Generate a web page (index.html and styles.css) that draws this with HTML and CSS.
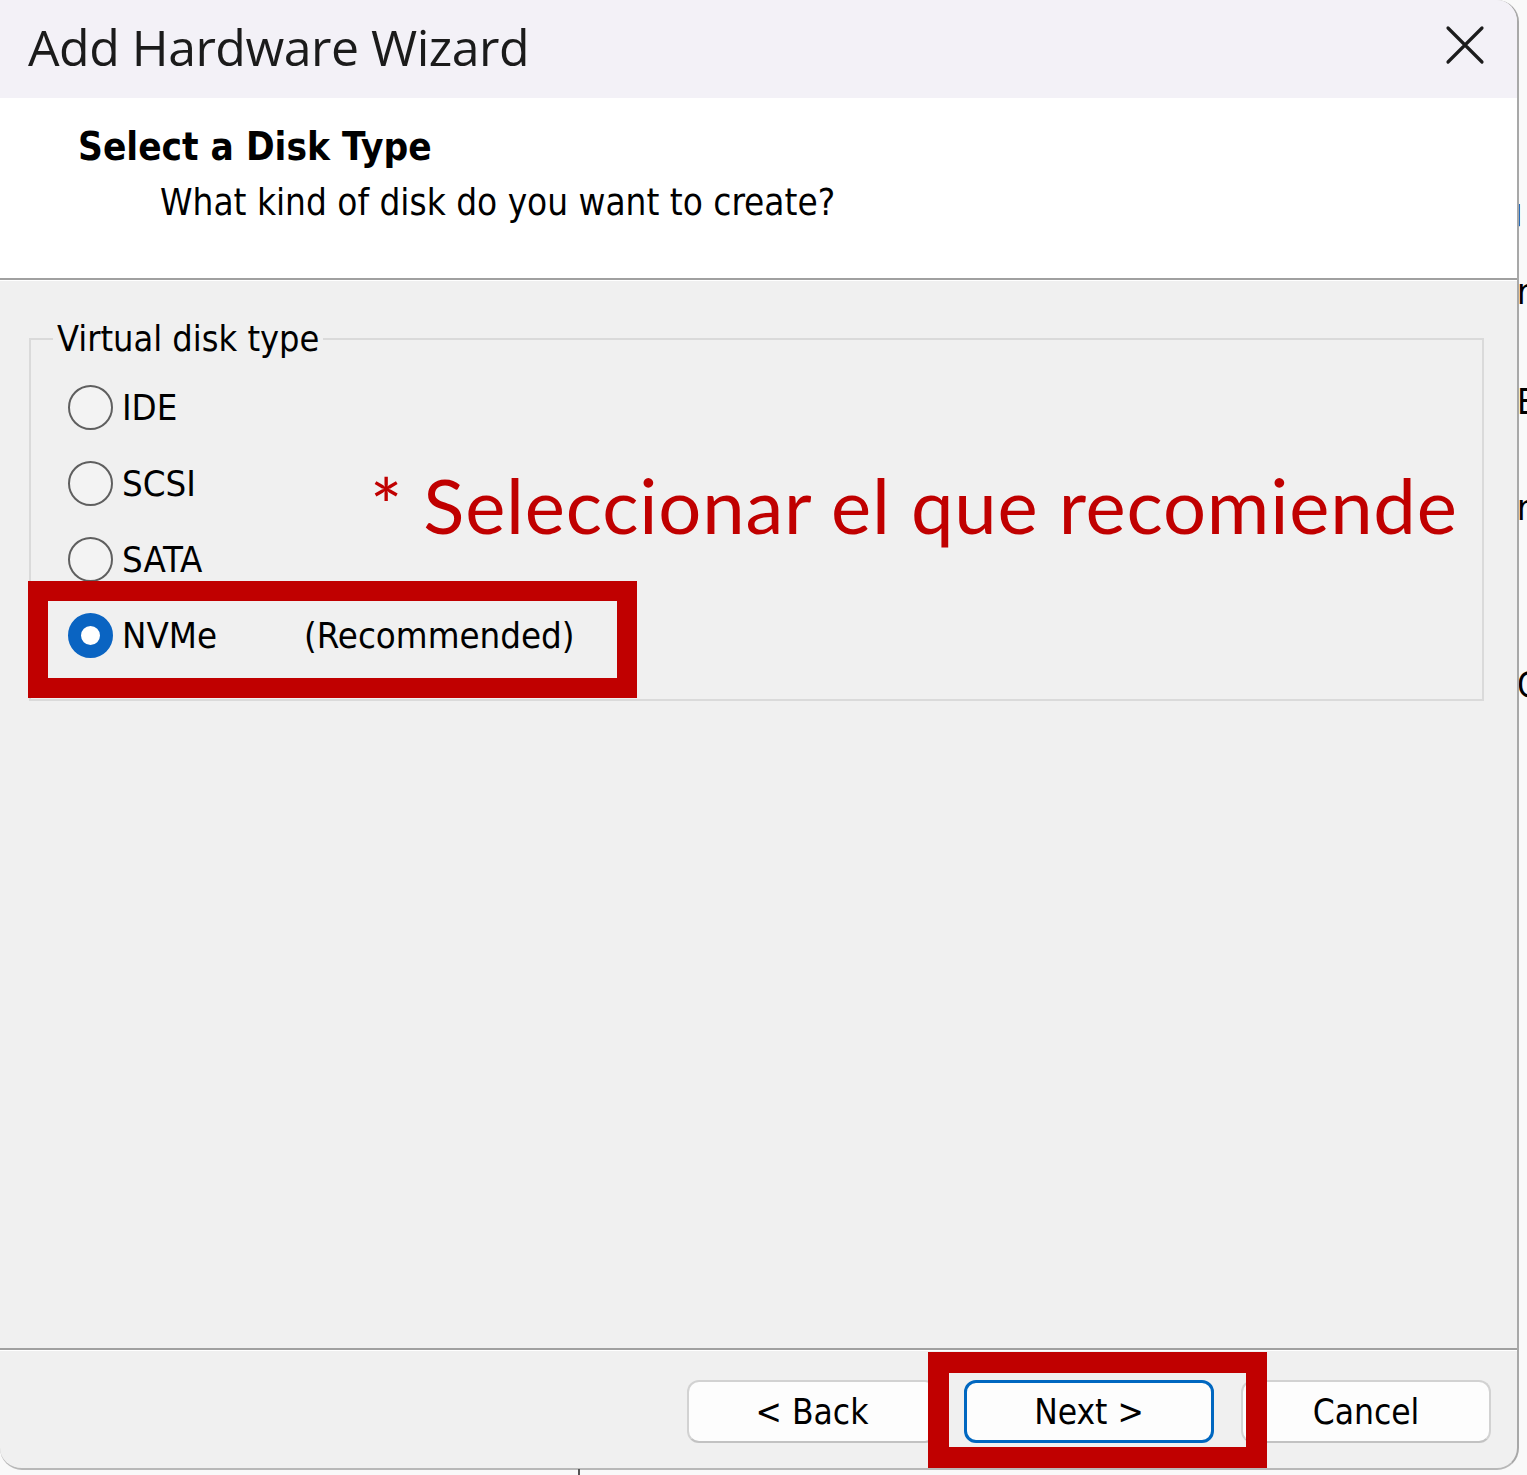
FILE: index.html
```html
<!DOCTYPE html>
<html lang="en">
<head>
<meta charset="utf-8">
<title>Add Hardware Wizard</title>
<link rel="stylesheet" href="styles.css">
</head>
<body>
<div class="desktop">
  <div class="window">
    <div class="titlebar">
      <span class="title">Add Hardware Wizard</span>
      <button class="close" aria-label="Close">
        <svg width="40" height="40" viewBox="0 0 40 40"><path d="M3 3 L37 37 M37 3 L3 37" stroke="#1c1c1c" stroke-width="3.2" stroke-linecap="round" fill="none"/></svg>
      </button>
    </div>
    <div class="header">
      <div class="h-title">Select a Disk Type</div>
      <div class="h-sub">What kind of disk do you want to create?</div>
    </div>
    <div class="sep"></div>
    <div class="content">
      <fieldset class="group">
        <legend>Virtual disk type</legend>
        <div class="opts">
          <label class="opt"><span class="radio"></span><span class="lbl">IDE</span></label>
          <label class="opt"><span class="radio"></span><span class="lbl">SCSI</span></label>
          <label class="opt"><span class="radio"></span><span class="lbl">SATA</span></label>
          <label class="opt"><span class="radio checked"></span><span class="lbl">NVMe</span><span class="rec">(Recommended)</span></label>
        </div>
      </fieldset>
      <div class="note">* Seleccionar el que recomiende</div>
      <div class="mark mark-nvme"></div>
    </div>
    <div class="sep"></div>
    <div class="footer">
      <button class="btn">&lt; Back</button>
      <button class="btn primary">Next &gt;</button>
      <button class="btn">Cancel</button>
      <div class="mark mark-next"></div>
    </div>
  </div>
  <div class="behind">
    <span class="frag f1">┘</span>
    <span class="frag f2">r</span>
    <span class="frag f3">)</span>
    <span class="frag f4">E</span>
    <span class="frag f5">r</span>
    <span class="frag f6">C</span>
  </div>
</div>
<div class="tick"></div>
</body>
</html>
```

FILE: styles.css
```css
html, body {
  margin: 0;
  padding: 0;
  background: #f9f9f9;
}
body {
  width: 1527px;
  height: 1475px;
  overflow: hidden;
  position: relative;
  font-family: "DejaVu Sans Condensed", "DejaVu Sans", sans-serif;
  font-stretch: condensed;
  color: #000;
}
.desktop {
  display: flex;
  align-items: flex-start;
}
.window {
  width: 1519px;
  height: 1470px;
  box-sizing: border-box;
  border-right: 2px solid #a8a8a8;
  border-bottom: 2px solid #b8b8b8;
  border-radius: 0 22px 22px 22px;
  overflow: hidden;
  display: flex;
  flex-direction: column;
  background: #f0f0f0;
  flex: none;
}
.titlebar {
  height: 98px;
  flex: none;
  background: #f3f1f7;
  display: flex;
  align-items: center;
  justify-content: space-between;
  padding: 0 32px 0 28px;
}
.title {
  font-family: "Open Sans", "Noto Sans", sans-serif;
  font-stretch: normal;
  font-size: 50px;
  color: #1b1b1b;
  letter-spacing: -0.5px;
  margin-top: -4px;
}
.close {
  background: none;
  border: 0;
  padding: 0;
  width: 40px;
  height: 40px;
  margin-top: -8px;
}
.close svg { display: block; }
.header {
  height: 180px;
  flex: none;
  background: #fff;
  box-sizing: border-box;
  padding: 24px 0 0 78px;
}
.h-title {
  font-weight: bold;
  font-size: 38.4px;
  line-height: 50px;
}
.h-sub {
  font-size: 36.6px;
  line-height: 44px;
  margin: 9px 0 0 82px;
}
.sep {
  height: 3px;
  flex: none;
  border-top: 2px solid #a0a0a0;
  background: #fff;
  box-sizing: border-box;
}
.content {
  height: 1067px;
  flex: none;
  position: relative;
  box-sizing: border-box;
  padding: 38px 33px 0 29px;
}
.group {
  margin: 0;
  min-width: 0;
  border: 2px solid #dadada;
  padding: 10px 0 26px 0;
}
.group legend {
  margin-left: 22px;
  padding: 0 4px;
  font-size: 35.8px;
  line-height: 40px;
}
.opts {
  padding-left: 37px;
}
.opt {
  display: flex;
  align-items: center;
  height: 76px;
}
.radio {
  width: 45px;
  height: 45px;
  box-sizing: border-box;
  border-radius: 50%;
  border: 2px solid #5f5f5f;
  background: #f3f3f3;
  flex: none;
  margin-right: 9px;
}
.radio.checked {
  border: 13px solid #0a64c2;
  background: #fff;
}
.lbl {
  font-size: 36.3px;
  width: 182px;
}
.rec {
  font-size: 36.3px;
}
.note {
  position: absolute;
  left: 370px;
  top: 186px;
  font-family: "Lato", sans-serif;
  font-stretch: normal;
  font-size: 76px;
  line-height: 76px;
  letter-spacing: 0.8px;
  color: #c00000;
  white-space: nowrap;
}
.mark {
  position: absolute;
  box-sizing: border-box;
  border: 20px solid #c00000;
}
.mark-nvme {
  left: 28px;
  top: 300px;
  width: 609px;
  height: 117px;
}
.footer {
  flex: 1;
  position: relative;
  display: flex;
  justify-content: flex-end;
  align-items: flex-start;
  gap: 27px;
  padding: 29px 26px 0 0;
}
.btn {
  width: 250px;
  height: 63px;
  box-sizing: border-box;
  border: 2px solid #d2d2d2;
  border-bottom-color: #c2c2c2;
  border-radius: 12px;
  background: #fdfdfd;
  font-family: "DejaVu Sans Condensed", "DejaVu Sans", sans-serif;
  font-stretch: condensed;
  font-size: 35px;
  color: #000;
  padding: 0;
}
.btn.primary {
  border: 3px solid #0067c0;
}
.mark-next {
  left: 928px;
  top: 1px;
  width: 339px;
  height: 116px;
  border-width: 21px;
}
.behind {
  position: relative;
  width: 8px;
  height: 1475px;
  overflow: hidden;
  flex: none;
}
.frag {
  position: absolute;
  left: 0;
  font-family: "DejaVu Sans Condensed", "DejaVu Sans", sans-serif;
  font-size: 35px;
  line-height: 40px;
  color: #000;
}
.f1 { top: 205px; left: -10px; }
.f2 { top: 272px; left: -2px; }
.f3 { top: 318px; left: -14px; }
.f4 { top: 382px; left: -2px; }
.f5 { top: 488px; left: -2px; }
.f6 { top: 665px; left: -2px; }
.tick {
  position: absolute;
  left: 578px;
  top: 1469px;
  width: 2px;
  height: 6px;
  background: #555;
}
```
